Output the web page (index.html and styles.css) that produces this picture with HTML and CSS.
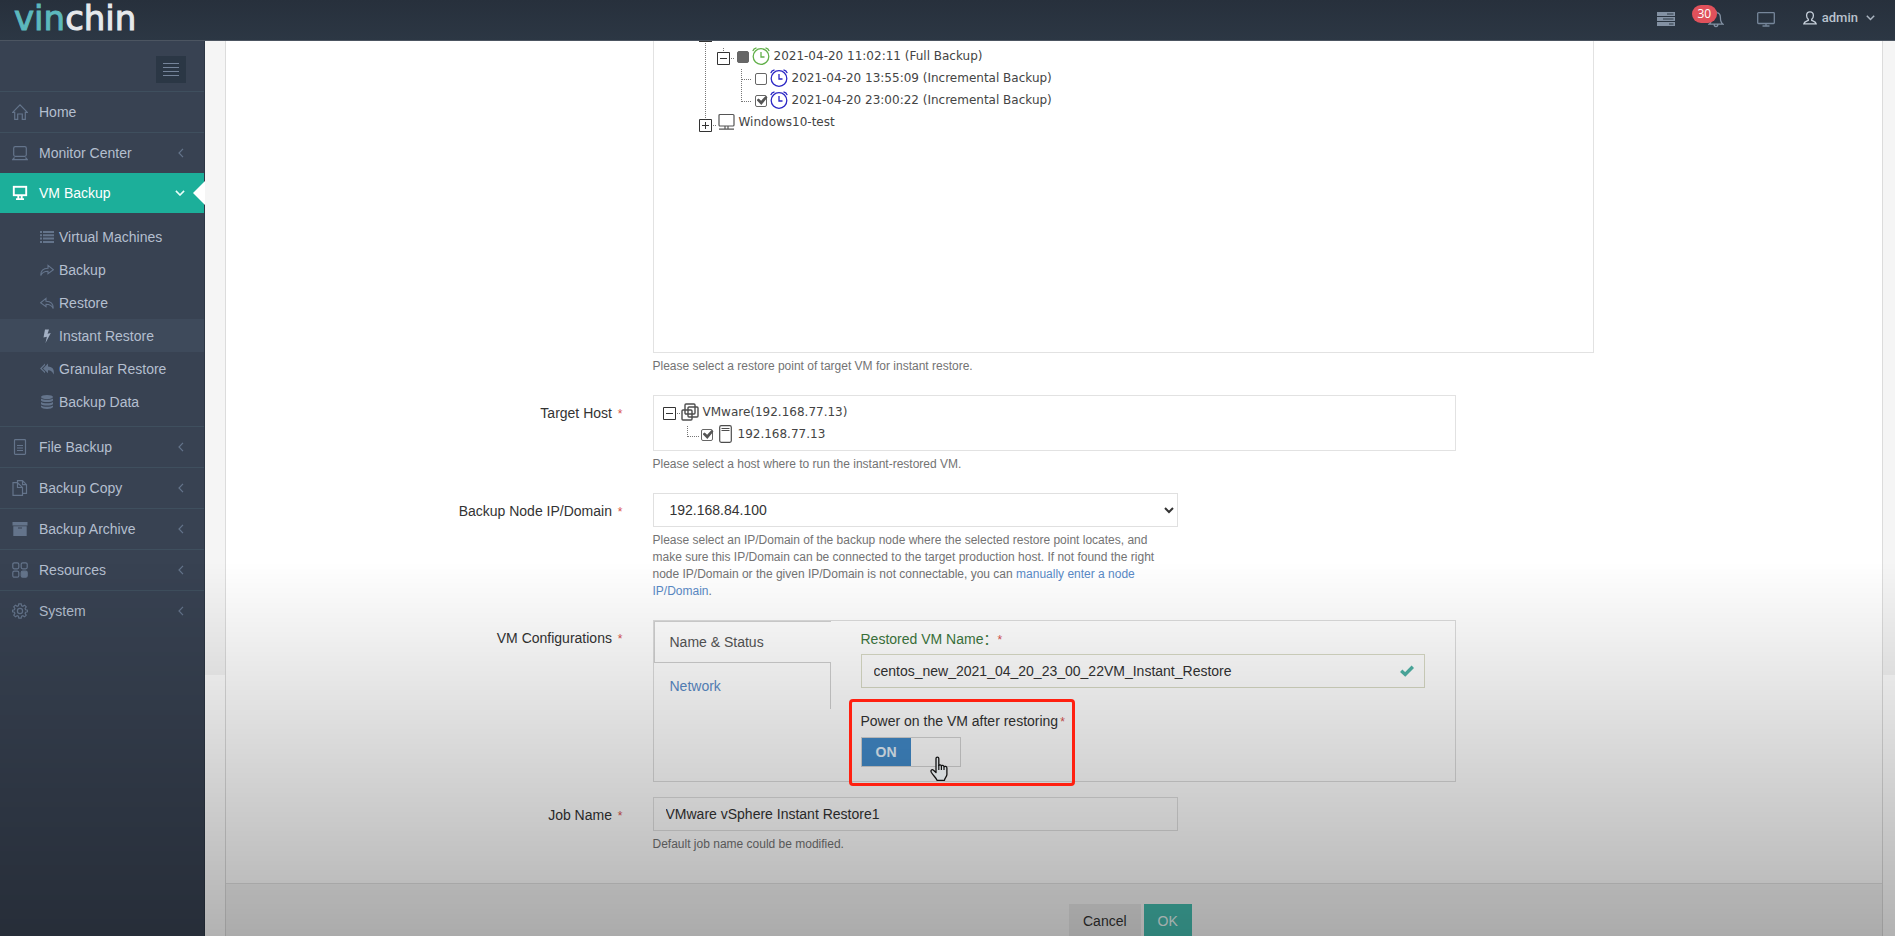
FILE: index.html
```html
<!DOCTYPE html>
<html lang="en">
<head>
<meta charset="utf-8">
<title>Vinchin - Instant Restore</title>
<link rel="stylesheet" href="styles.css">
</head>
<body>
<header class="topbar">
  <a class="logo" href="#"><span class="logo-accent">vin</span>chin</a>
  <nav class="topnav" aria-label="Account">
    <button class="icon-btn" type="button" aria-label="Jobs">
      <svg width="18" height="14" viewBox="0 0 18 14"><path fill="#8391a3" d="M0 0h18v4H0zM0 5h18v4H0zM0 10h18v4H0z"/><path stroke="#2b3643" stroke-width="1" d="M10 2h6.500M6 7h10.500M12 12h4.500"/></svg>
    </button>
    <button class="icon-btn bell" type="button" aria-label="Notifications">
      <svg width="16" height="18" viewBox="0 0 16 18" fill="none" stroke="#8391a3" stroke-width="1.300"><path d="M1 14.200c2-1.400 2.600-3.600 2.600-6.700C3.600 4.500 5.300 2.600 8 2.600s4.400 1.900 4.400 4.900c0 3.100.6 5.300 2.600 6.700zM6.200 14.500c0 2.800 3.600 2.800 3.600 0M8 2.600V1"/></svg>
      <span class="badge">30</span>
    </button>
    <button class="icon-btn" type="button" aria-label="Screen">
      <svg width="18" height="15" viewBox="0 0 18 15" fill="none" stroke="#76869a" stroke-width="1.300"><rect x=".7" y=".7" width="16.600" height="10.800" rx=".8"/><path d="M9 11.500v2.300M5.500 14h7"/></svg>
    </button>
    <button class="user" type="button">
      <svg width="14" height="14" viewBox="0 0 14 14" fill="none" stroke="#c6cfda" stroke-width="1.300"><path d="M7 .8C4.800.8 3.600 2.300 3.600 4.400c0 1.800.7 3 1.700 3.800v1.100c-1.600.8-4.200 1-4.500 3.600h12.400c-.3-2.600-2.900-2.800-4.500-3.600V8.200c1-.8 1.700-2 1.700-3.800C10.400 2.300 9.200.8 7 .8z"/></svg>
      <span>admin</span>
      <svg class="caret" width="9" height="6" viewBox="0 0 9 6" fill="none" stroke="#aab4c0" stroke-width="1.500"><path d="M.8.800l3.700 3.700L8.200.800"/></svg>
    </button>
  </nav>
</header>

<div class="page">
  <aside class="sidebar">
    <div class="toggler-row">
      <button class="toggler" type="button" aria-label="Toggle menu">
        <svg width="16" height="14" viewBox="0 0 16 14" stroke="#75849a" stroke-width="1"><path d="M0 .5h16M0 4.500h16M0 8.500h16M0 12.500h16"/></svg>
      </button>
    </div>
    <ul class="menu">
      <li><a class="menu-link" href="#">
        <svg class="mi" viewBox="0 0 16 16"><path d="M2.700 8.300H.7L8 .9l7.300 7.400h-2v7h-3V10H5.700v5.300h-3z"/></svg>
        <span>Home</span></a></li>
      <li><a class="menu-link" href="#">
        <svg class="mi" viewBox="0 0 16 16"><rect x="1.700" y="1.700" width="12.600" height="9.600" rx="1.500"/><path d="M2.500 12.500L.7 14.600h14.600l-1.800-2.100"/></svg>
        <span>Monitor Center</span>
        <svg class="arrow" viewBox="0 0 6 10"><path d="M5 .8L1 5l4 4.200"/></svg></a></li>
      <li class="open"><a class="menu-link active" href="#">
        <svg class="mi" viewBox="0 0 16 16"><rect x="1.800" y="1.800" width="12.400" height="8.400" stroke-width="1.900"/><path stroke-width="1.900" d="M6.300 10.500v3.500M9.700 10.500v3.500M4 14.100h8"/></svg>
        <span>VM Backup</span>
        <svg class="arrow-down" viewBox="0 0 10 6"><path d="M.9.900L5 5l4.100-4.100"/></svg></a>
        <ul class="submenu">
          <li><a class="sub-link" href="#"><svg class="si fill" viewBox="0 0 14 14"><path d="M0 1h2v2H0zM3 1h11v2H3zM0 4.300h2v2H0zM3 4.300h11v2H3zM0 7.600h2v2H0zM3 7.600h11v2H3zM0 10.900h2v2H0zM3 10.900h11v2H3z"/></svg><span>Virtual Machines</span></a></li>
          <li><a class="sub-link" href="#"><svg class="si" viewBox="0 0 14 14"><path d="M.8 12.500C.6 8 3 5.300 8 5.200V2.300L13.400 6.700 8 10.700V8.200C4.500 8.200 2.200 9 .8 12.500z"/></svg><span>Backup</span></a></li>
          <li><a class="sub-link" href="#"><svg class="si" viewBox="0 0 14 14"><path d="M13.200 12.500C13.400 8 11 5.300 6 5.200V2.300L.6 6.700 6 10.700V8.200c3.500 0 5.800.8 7.200 4.300z"/></svg><span>Restore</span></a></li>
          <li><a class="sub-link current" href="#"><svg class="si fill" viewBox="0 0 14 14"><path d="M5 .5h4L7.600 4.700l3.200-.7L5.500 14l1.400-6.300-3.400.8z"/></svg><span>Instant Restore</span></a></li>
          <li><a class="sub-link" href="#"><svg class="si fill" viewBox="0 0 14 14"><path d="M5 1.500v1.800L1.800 6.400 5 9.500v1.800L0 6.400zM8 1.500v3.100c4.500.3 6.700 2.700 5.600 8-.9-2.800-2.500-4.200-5.600-4.300v3L3 6.400z"/></svg><span>Granular Restore</span></a></li>
          <li><a class="sub-link" href="#"><svg class="si fill" viewBox="0 0 14 14"><ellipse cx="7" cy="2" rx="6" ry="2"/><path d="M1 3.500c1.500 1.800 10.500 1.800 12 0v2c-1 2-11 2-12 0zM1 7c1.500 1.800 10.500 1.800 12 0v2c-1 2-11 2-12 0zM1 10.400c1.500 1.800 10.500 1.800 12 0V12c-1 2.500-11 2.500-12 0z"/></svg><span>Backup Data</span></a></li>
        </ul></li>
      <li><a class="menu-link" href="#">
        <svg class="mi" viewBox="0 0 16 16"><rect x="2.500" y=".7" width="11" height="14.600" rx=".8"/><path d="M5 6.500h6M5 9h6M5 11.500h6"/></svg>
        <span>File Backup</span>
        <svg class="arrow" viewBox="0 0 6 10"><path d="M5 .8L1 5l4 4.200"/></svg></a></li>
      <li><a class="menu-link" href="#">
        <svg class="mi" viewBox="0 0 16 16"><path d="M5.500 2.600H1v12.700h9.500V7.500L5.500 2.600V7.500h5M5.500 2.600V.7h5l4 4v8.600h-4M10.500.7v4h4"/></svg>
        <span>Backup Copy</span>
        <svg class="arrow" viewBox="0 0 6 10"><path d="M5 .8L1 5l4 4.200"/></svg></a></li>
      <li><a class="menu-link" href="#">
        <svg class="mi fill" viewBox="0 0 16 16"><path d="M.5 1h15v3.500H.5z"/><path fill-rule="evenodd" d="M1.300 5.200h13.400V15H1.300zM6 6.600v1h4v-1z"/></svg>
        <span>Backup Archive</span>
        <svg class="arrow" viewBox="0 0 6 10"><path d="M5 .8L1 5l4 4.200"/></svg></a></li>
      <li><a class="menu-link" href="#">
        <svg class="mi" viewBox="0 0 16 16"><rect x=".8" y=".8" width="6" height="6" rx="1.500"/><rect x="9.200" y=".8" width="6" height="6" rx="1.500"/><rect x=".8" y="9.200" width="6" height="6" rx="1.500"/><rect class="solid" x="9.200" y="9.200" width="6" height="6" rx="1.500"/></svg>
        <span>Resources</span>
        <svg class="arrow" viewBox="0 0 6 10"><path d="M5 .8L1 5l4 4.200"/></svg></a></li>
      <li><a class="menu-link" href="#">
        <svg class="mi" viewBox="0 0 16 16"><circle cx="8" cy="8" r="2.600"/><path d="M6.800.8h2.400l.4 2 1.200.5 1.800-1.100 1.600 1.600-1.100 1.800.5 1.200 2 .4v1.600l-2 .4-.5 1.200 1.100 1.800-1.600 1.600-1.800-1.100-1.200.5-.4 2H6.800l-.4-2-1.200-.5-1.800 1.100-1.600-1.600 1.100-1.800-.5-1.200-1.900-.4V7.200l1.900-.4.5-1.200-1.100-1.800 1.600-1.600 1.800 1.100 1.200-.5z"/></svg>
        <span>System</span>
        <svg class="arrow" viewBox="0 0 6 10"><path d="M5 .8L1 5l4 4.200"/></svg></a></li>
    </ul>
  </aside>

  <main class="content">
    <form class="card">
      <div class="form-body">
        <div class="row">
          <div class="field span-7">
            <div class="tree-panel restore-points">
              <div class="tree-cut"><svg width="13" height="4" viewBox="0 0 13 4"><path fill="#333" d="M0 0h13v1H0z"/><path class="dots" d="M6.500 2v2"/></svg></div>
              <ul class="tree">
                <li class="tree-row">
                  <svg width="18" height="22"><path class="dots" d="M6.500 0v22"/></svg>
                  <button class="node-toggle" type="button" aria-label="Collapse"><svg width="13" height="22"><path class="dots" d="M6.500 3v4"/><path class="box" d="M.5 7.500h12v12H.5zM3 13.500h7"/></svg></button>
                  <svg width="7" height="22"><path class="dots" d="M1 13.500h4"/></svg>
                  <input class="tick partial" type="checkbox" id="full">
                  <label for="full" class="node-label"><svg width="18" height="18" viewBox="0 0 18 18" fill="none" stroke="#62b04a" stroke-width="1.300"><circle cx="9" cy="9.500" r="7.800"/><path d="M9 5v5h3.500M.8 4.200Q1.500 1.500 4.500.8M17.200 4.200Q16.500 1.500 13.500.8"/></svg><span>2021-04-20 11:02:11 (Full Backup)</span></label>
                </li>
                <li class="tree-row">
                  <svg width="56" height="22"><path class="dots" d="M6.500 0v22M42.500 2v20M43 12.500h10"/></svg>
                  <input class="tick" type="checkbox" id="inc1">
                  <label for="inc1" class="node-label"><svg width="18" height="18" viewBox="0 0 18 18" fill="none" stroke="#2a26c4" stroke-width="1.300"><circle cx="9" cy="9.500" r="7.800"/><path d="M9 5v5h3.500M.8 4.200Q1.500 1.500 4.500.8M17.200 4.200Q16.500 1.500 13.500.8"/></svg><span>2021-04-20 13:55:09 (Incremental Backup)</span></label>
                </li>
                <li class="tree-row">
                  <svg width="56" height="22"><path class="dots" d="M6.500 0v22M42.500 0v13M43 12.500h10"/></svg>
                  <input class="tick" type="checkbox" id="inc2" checked>
                  <label for="inc2" class="node-label"><svg width="18" height="18" viewBox="0 0 18 18" fill="none" stroke="#2a26c4" stroke-width="1.300"><circle cx="9" cy="9.500" r="7.800"/><path d="M9 5v5h3.500M.8 4.200Q1.500 1.500 4.500.8M17.200 4.200Q16.500 1.500 13.500.8"/></svg><span>2021-04-20 23:00:22 (Incremental Backup)</span></label>
                </li>
                <li class="tree-row">
                  <button class="node-toggle" type="button" aria-label="Expand"><svg width="13" height="22"><path class="dots" d="M6.500 0v7"/><path class="box" d="M.5 8.500h12v12H.5zM3 14.500h7M6.500 11v7"/></svg></button>
                  <svg width="6" height="22"><path class="dots" d="M1 14.500h4"/></svg>
                  <span class="node-label machine"><svg width="17" height="18" viewBox="0 0 17 18" fill="none" stroke="#555" stroke-width="1.200"><rect x="1" y="1.500" width="15" height="11.500" rx="1"/><path d="M7 13v2.500M10 13v2.500M1 16.200h15"/></svg><span>Windows10-test</span></span>
                </li>
              </ul>
            </div>
            <p class="hint">Please select a restore point of target VM for instant restore.</p>
          </div>
        </div>

        <div class="row">
          <span class="row-label">Target Host <span class="req">*</span></span>
          <div class="field span-6">
            <div class="tree-panel hosts">
              <ul class="tree">
                <li class="tree-row">
                  <button class="node-toggle" type="button" aria-label="Collapse"><svg width="13" height="22"><path class="box" d="M.5 6.500h12v12H.5zM3 12.500h7"/></svg></button>
                  <svg width="5" height="22"><path class="dots" d="M1 12.500h4"/></svg>
                  <span class="node-label"><svg width="18" height="18" viewBox="0 0 18 18" fill="none" stroke="#4d4d4d" stroke-width="1.400"><rect x="4" y="1" width="10" height="10" rx="1"/><rect x="7" y="4" width="10" height="10" rx="1"/><rect x="1" y="7" width="10" height="10" rx="1"/></svg><span>VMware(192.168.77.13)</span></span>
                </li>
                <li class="tree-row nested">
                  <svg width="14" height="22"><path class="dots" d="M.5 3v11M1 13.500h11"/></svg>
                  <input class="tick" type="checkbox" id="host" checked>
                  <label for="host" class="node-label server"><svg width="13" height="18" viewBox="0 0 13 18" fill="none" stroke="#4d4d4d" stroke-width="1.200"><rect x=".7" y=".7" width="11.600" height="16.600" rx="1.500"/><path d="M2.500 3.500h8M2.500 5.500h8"/></svg><span>192.168.77.13</span></label>
                </li>
              </ul>
            </div>
            <p class="hint">Please select a host where to run the instant-restored VM.</p>
          </div>
        </div>

        <div class="row">
          <label class="row-label" for="node">Backup Node IP/Domain <span class="req">*</span></label>
          <div class="field span-4">
            <select class="control" id="node"><option>192.168.84.100</option></select>
            <p class="hint">Please select an IP/Domain of the backup node where the selected restore point locates, and make sure this IP/Domain can be connected to the target production host. If not found the right node IP/Domain or the given IP/Domain is not connectable, you can <a href="#">manually enter a node IP/Domain</a>.</p>
          </div>
        </div>

        <div class="row tight">
          <span class="row-label">VM Configurations <span class="req">*</span></span>
          <div class="field span-6">
            <div class="config">
              <div class="tabs" role="tablist">
                <button class="tab selected" type="button" role="tab" aria-selected="true">Name &amp; Status</button>
                <button class="tab" type="button" role="tab" aria-selected="false">Network</button>
              </div>
              <div class="tab-pane">
                <label class="ok-label" for="vmname">Restored VM Name：<span class="req">*</span></label>
                <div class="valid-input">
                  <input class="control valid" id="vmname" type="text" value="centos_new_2021_04_20_23_00_22VM_Instant_Restore">
                  <svg class="valid-mark" width="14" height="12" viewBox="0 0 14 12"><path fill="none" stroke="#4fb3a6" stroke-width="3.400" d="M1.200 5.800L5.200 9.500 12.800 1.800"/></svg>
                </div>
                <div class="power">
                  <span class="power-label" id="power-label">Power on the VM after restoring<span class="req">*</span></span>
                  <label class="switch"><input type="checkbox" checked aria-labelledby="power-label"><span class="switch-on">ON</span></label>
                  <div class="highlight"></div>
                  <svg class="pointer" width="18" height="26" viewBox="0 0 18 26"><path fill="#d4d8da" stroke="#111" stroke-width="1.300" stroke-linejoin="round" d="M6 2.500C6 .7 8.800.7 8.800 2.500V9.500C9.200 8.500 11.200 8.500 11.400 9.900 12 9 13.800 9.200 14 10.700 14.700 10.100 16.800 10.300 16.900 12V18.500C16.900 20.700 14.500 22 14.500 24.300L7 24.300C6.200 21.600 3 19.500 1.300 16.200.3 14 2 12.900 3.500 14.200L6 16.500z"/><path stroke="#111" stroke-width="1.200" d="M8.800 9v5M11.400 10v4M14 10.700V14"/></svg>
                </div>
              </div>
            </div>
          </div>
        </div>

        <div class="row">
          <label class="row-label" for="job">Job Name <span class="req">*</span></label>
          <div class="field span-4">
            <input class="control" id="job" type="text" value="VMware vSphere Instant Restore1">
            <p class="hint">Default job name could be modified.</p>
          </div>
        </div>
      </div>

      <div class="form-actions">
        <div class="actions">
          <button class="btn" type="button">Cancel</button>
          <button class="btn primary" type="button">OK</button>
        </div>
      </div>
    </form>
  </main>
</div>
<div class="shade"></div>
</body>
</html>
```

FILE: styles.css
```css
* { box-sizing: border-box; }

body {
  margin: 0;
  height: 100vh;
  display: flex;
  flex-direction: column;
  overflow: hidden;
  font: 14px/20px "Liberation Sans", "Noto Sans CJK SC", sans-serif;
  color: #333;
  background: #fff;
}

ul { list-style: none; margin: 0; padding: 0; }
a { text-decoration: none; color: #5a8ac6; }
button { font: inherit; border: 0; background: none; padding: 0; color: inherit; }
svg { display: block; flex: none; }

/* Top bar */
.topbar {
  flex: none;
  display: flex;
  justify-content: space-between;
  height: 41px;
  padding: 0 20px 0 14px;
  background: linear-gradient(#27303c, #2c3744);
  border-bottom: 1px solid #4c5561;
}
.logo {
  font: 34px/36px "DejaVu Sans", sans-serif;
  color: #e6e9ec;
  -webkit-text-stroke: 1px;
}
.logo-accent { color: #5cb8bd; }
.topnav { display: flex; gap: 28px; padding-bottom: 2px; }
.icon-btn { display: flex; align-items: center; }
.bell { position: relative; width: 26px; justify-content: center; }
.badge {
  position: absolute;
  top: 5px;
  right: 12px;
  width: 25px;
  border-radius: 9px;
  background: #e0515b;
  color: #fff;
  font: 12px/18px "Open Sans", sans-serif;
  text-align: center;
}
.user {
  display: flex;
  align-items: center;
  gap: 5px;
  padding-bottom: 2px;
  font: 500 13px/18px Roboto, sans-serif;
  color: #b9c2cd;
}
.caret { margin-left: 3px; }

/* Side menu */
.page { flex: 1; display: flex; min-height: 0; }
.sidebar { flex: none; width: 205px; background: #384252; border-right: 1px solid #2d3745; }
.toggler-row { display: flex; justify-content: flex-end; padding: 15px 18px 8px; }
.toggler {
  display: flex;
  align-items: center;
  justify-content: center;
  width: 30px;
  height: 27px;
  background: #2b3745;
}
.menu-link {
  display: flex;
  align-items: center;
  gap: 11px;
  height: 41px;
  padding: 0 20px 0 12px;
  border-top: 1px solid #3f4f5e;
  color: #b4bfcf;
}
.menu-link span { flex: 1; }
.mi { width: 16px; height: 16px; fill: none; stroke: #64748b; stroke-width: 1.2; }
.mi.fill { fill: #64748b; stroke: none; }
.solid { fill: #64748b; }
.arrow { width: 6px; height: 10px; fill: none; stroke: #64748b; stroke-width: 1.2; }
.arrow-down { width: 10px; height: 6px; fill: none; stroke: #e8fff9; stroke-width: 1.6; }
.menu-link.active {
  position: relative;
  height: 40px;
  padding-right: 19px;
  border-top: 0;
  background: #1caf9a;
  color: #fff;
}
.active .mi { stroke: #fff; }
.active::after {
  content: "";
  position: absolute;
  right: -1px;
  top: 8px;
  border: 12px solid transparent;
  border-left: 0;
  border-right-color: #fff;
}
.submenu { padding: 7px 0 8px; }
.sub-link {
  display: flex;
  align-items: center;
  gap: 5px;
  height: 33px;
  padding-left: 40px;
  color: #b4bfcf;
}
.sub-link.current { background: #3e4a5b; }
.si { width: 14px; height: 14px; fill: none; stroke: #64748b; stroke-width: 1.1; }
.si.fill { fill: #64748b; stroke: none; }
.current .si.fill { fill: #a3b0c4; }

/* Content */
.content {
  flex: 1;
  min-width: 0;
  padding: 0 12px 0 20px;
  background: linear-gradient(#f5f5f5 634px, #fff 634px);
}
.card { border: 1px solid #dcdcdc; border-width: 0 1px; background: #fff; }
.form-body { display: flex; flex-direction: column; gap: 20px; padding-bottom: 30px; }
.row {
  display: grid;
  grid-template-columns: repeat(12, minmax(0, 1fr));
  margin: 0 -5px;
}
.row.tight { margin-bottom: -5px; }
.row-label { grid-column: 1 / 4; padding: 8px 15px 0; text-align: right; }
.req { color: #d9534f; font-size: 12px; margin-left: 2px; }
.field { grid-column-start: 4; padding: 0 15px; }
.span-4 { grid-column-end: span 4; }
.span-6 { grid-column-end: span 6; }
.span-7 { grid-column-end: span 7; }
.hint { margin: 5px 0 0; font-size: 12px; line-height: 17px; color: #737373; }

.tree-panel { border: 1px solid #e2e2e2; }
.restore-points { min-height: 312px; border-top: 0; padding-left: 45px; }
.hosts { padding: 5px 9px; }
.tree-row {
  display: flex;
  align-items: center;
  height: 22px;
  font: 12px/22px "DejaVu Sans", sans-serif;
  color: #444;
}
.tree-row.nested { padding-left: 24px; }
.dots { fill: none; stroke: #777; stroke-dasharray: 1 1; }
.box { fill: #fff; stroke: #333; }
.node-toggle { display: flex; }
.node-label { display: flex; align-items: center; gap: 4px; padding-left: 3px; }
.node-label.machine { padding-left: 0; }
.hosts .node-label { gap: 4px; padding-left: 0; }
.hosts .node-label.server { gap: 6px; padding-left: 6px; }
.tick {
  appearance: none;
  flex: none;
  position: relative;
  width: 12px;
  height: 12px;
  margin: 2px 0 0;
  border: 1px solid #666;
  border-radius: 2px;
  background: #fff;
}
.tick.partial { background: #666; }
.tick:checked::before {
  content: "";
  position: absolute;
  inset: 0 -2px 1px 1px;
  background: #555;
  clip-path: polygon(0 45%, 20% 28%, 42% 52%, 82% 0, 100% 18%, 44% 100%);
}

.control {
  display: block;
  width: 100%;
  height: 34px;
  padding: 6px 12px;
  border: 1px solid #e0e0e0;
  border-radius: 0;
  background: transparent;
  font: inherit;
  color: #333;
}

.config { display: flex; gap: 30px; min-height: 162px; border: 1px solid #dcdcdc; }
.tabs { width: 177px; align-self: flex-start; }
.tab {
  display: block;
  width: 100%;
  height: 46px;
  padding: 0 16px;
  text-align: left;
  border-right: 1px solid #d0d0d0;
  color: #5a8ac6;
}
.tab.selected {
  height: 42px;
  padding: 0 15px;
  border: 1px solid #d0d0d0;
  border-right: 0;
  color: #555;
}
.tab-pane { flex: 1; padding: 8px 30px 14px 0; }
.ok-label { display: block; margin-bottom: 4px; color: #3c763d; }
.ok-label .req { margin-left: 0; }
.valid-input { position: relative; }
.control.valid { border-color: #d9dbc6; }
.valid-mark { position: absolute; right: 11px; top: 11px; }
.power { position: relative; display: flex; flex-direction: column; align-items: flex-start; gap: 5px; margin-top: 23px; }
.switch { display: flex; width: 100px; height: 30px; border: 1px solid #d4d4d4; }
.switch input { position: absolute; opacity: 0; margin: 0; }
.switch-on {
  width: 49px;
  background: #428bca;
  color: #e4f1fb;
  font-weight: bold;
  line-height: 28px;
  text-align: center;
}
.highlight {
  position: absolute;
  z-index: 20;
  left: -12px;
  top: -12px;
  width: 226px;
  height: 87px;
  border: 3px solid #ff2010;
  border-radius: 4px;
}
.pointer { position: absolute; z-index: 21; left: 69px; top: 45px; }

.form-actions {
  min-height: 60px;
  padding-top: 20px;
  border-top: 1px solid #e2e2e2;
  background: #f5f5f5;
}
.actions { display: flex; gap: 3px; margin-left: 50%; padding-left: 15px; }
.btn { height: 34px; padding: 0 14px; background: #e6e6e6; color: #333; }
.btn.primary { background: #45bbae; color: #e6f6f4; }

/* Darkening veil over the lower part of the screen */
.shade {
  position: fixed;
  z-index: 10;
  inset: 0;
  pointer-events: none;
  background: linear-gradient(transparent 60%, rgba(0, 0, 0, 0.3));
}
```
